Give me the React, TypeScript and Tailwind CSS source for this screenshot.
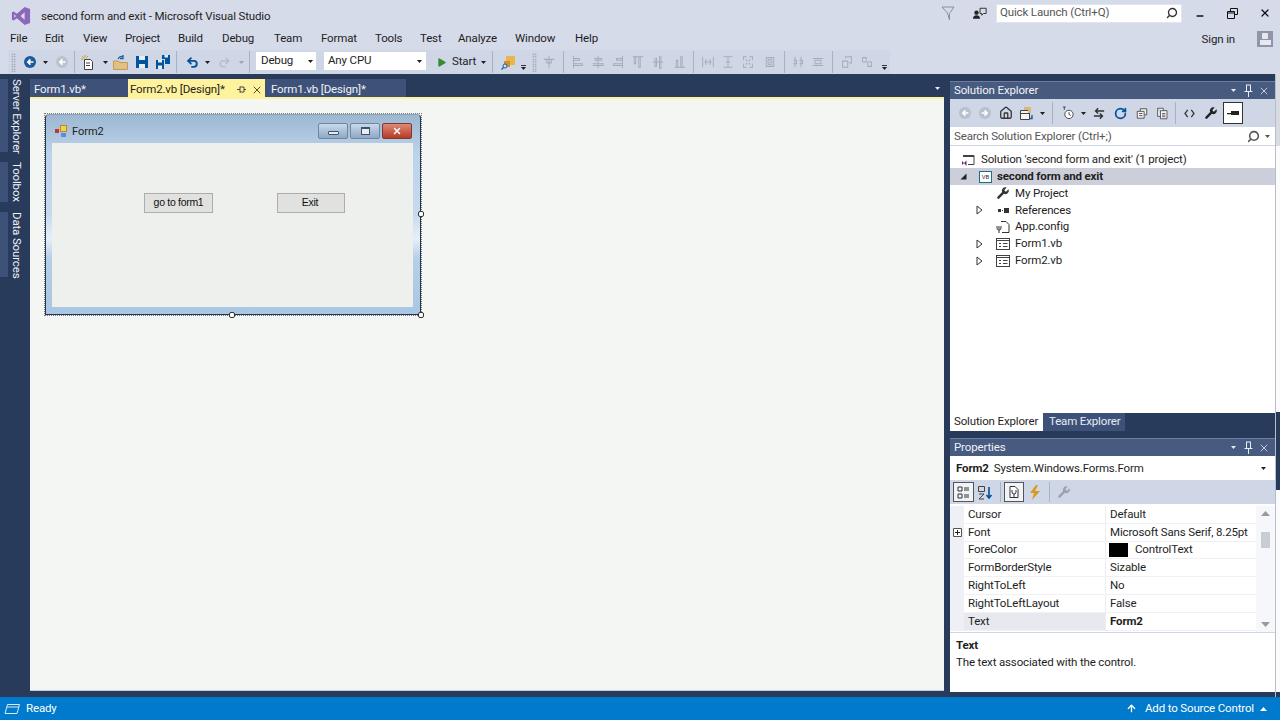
import React from 'react';
import { Minus, Search, X, Wrench, Home, RotateCw, Play, Undo2, Redo2, ArrowUp } from 'lucide-react';

const Caret = ({ className = 'text-[#1e1e1e]' }: { className?: string }) => (
  <svg width="5" height="3" viewBox="0 0 5 3" className={`shrink-0 ${className}`}><path d="M0 0h5L2.5 3z" fill="currentColor" /></svg>
);

const Sep = ({ className }: { className: string }) => <div className={`w-px h-[22px] bg-[#a9b1c4] shrink-0 ${className}`} />;

const Circle = ({ color, className = '', flip = false }: { color: string; className?: string; flip?: boolean }) => (
  <svg width="12" height="12" viewBox="0 0 14 14" className={`shrink-0 ${flip ? '-scale-x-100' : ''} ${className}`}>
    <circle cx="7" cy="7" r="7" fill={color} />
    <path d="M11 7H5M7.5 4L4.5 7l3 3" stroke="#fff" strokeWidth="2" fill="none" />
  </svg>
);

const Grip = ({ className }: { className: string }) => (
  <div className={`w-[5px] h-[19px] shrink-0 bg-[radial-gradient(#8f97ac_0.7px,transparent_0.9px)] bg-[length:2.5px_2.5px] ${className}`} />
);

const Faint = ({ d, className }: { d: string; className: string }) => (
  <svg width="12" height="14" viewBox="0 0 16 16" preserveAspectRatio="none" className={`shrink-0 ${className}`}>
    <path d={d} stroke="#a3abbe" strokeWidth="1.2" fill="none" />
  </svg>
);

const FormIcon = () => (
  <svg width="14" height="12" viewBox="0 0 14 12">
    <rect x="0.5" y="0.5" width="13" height="11" fill="#fff" stroke="#424242" />
    <path d="M0.5 2.5h13M3 5.5h2M7 5.5h4.5M3 8.5h2M7 8.5h4.5" stroke="#424242" />
  </svg>
);

const Expander = () => (
  <svg width="7" height="10" viewBox="0 0 7 10"><path d="M1 1l5 4-5 4z" fill="#fff" stroke="#333" /></svg>
);

const menus = ['File', 'Edit', 'View', 'Project', 'Build', 'Debug', 'Team', 'Format', 'Tools', 'Test', 'Analyze', 'Window', 'Help'];
const menuWidths = [35, 38, 42, 53, 44, 52, 47, 54, 45, 38, 57, 60, 40];

function TitleRow() {
  return (
    <div className="h-[26px] flex items-center shrink-0">
      <svg width="20" height="20" viewBox="0 0 22 22" className="ml-[11px] mt-[6px] shrink-0">
        <path d="M15 1l6 2.4v15.2L15 21 6.5 13.5 3 16 1 15V7l2-1 3.500 2.500z" fill="#8c68b8" />
        <path d="M15 7l-4.500 4 4.500 4zM3.500 9v4l2-2z" fill="#d6dbe9" />
      </svg>
      <span className="ml-[10px] text-[11.5px] text-[#1e1e1e] mt-[7px]">second form and exit - Microsoft Visual Studio</span>
      <div className="ml-auto flex items-center">
        <svg width="14" height="16" viewBox="0 0 14 16" className="mr-[18px]"><path d="M1 2h12L8.500 8.500V15L6.500 8z" fill="none" stroke="#8a8f9c" /></svg>
        <svg width="14" height="13" viewBox="0 0 16 14" className="mr-[9px]">
          <circle cx="4" cy="6" r="2.500" fill="#222" /><path d="M0 13c0-3 2-4 4-4s4 1 4 4z" fill="#222" />
          <path d="M8 1h7v6h-3l-2 2V7H8z" fill="none" stroke="#222" />
        </svg>
        <div className="w-[186px] h-[19px] bg-white flex items-center px-[3px] text-[11.5px] text-[#555] mr-[13px] border border-[#e2e5ee]">
          <span>Quick Launch (Ctrl+Q)</span>
          <Search size={12} strokeWidth={2.8} className="ml-auto text-[#333] -scale-x-100" />
        </div>
        <Minus size={10} strokeWidth={3.5} className="text-[#111] mr-[22px] mt-[5px]" />
        <svg width="11" height="11" viewBox="0 0 11 11" className="mr-[21px]"><path d="M3.500 3V.5h7v6H8M.5 3.500h7v7h-7zM.5 5h7" fill="none" stroke="#111" /></svg>
        <X size={12} strokeWidth={2.4} className="text-[#111] mr-[9px]" />
      </div>
    </div>
  );
}

function MenuRow() {
  return (
    <div className="h-[24px] flex items-center text-[11.5px] text-[#1e1e1e] shrink-0 pt-[1px]">
      <div className="flex pl-[10px]">
        {menus.map((m, i) => (
          <span key={m} style={{ width: menuWidths[i] }} className="shrink-0">{m}</span>
        ))}
      </div>
      <span className="ml-auto mt-[2px]">Sign in</span>
      <div className="w-[16px] h-[16px] bg-[#8f96a8] mr-[7px] ml-[22px] flex flex-col items-center justify-center gap-[1px]">
        <div className="w-[6px] h-[6px] bg-[#e7e9ef] rounded-[1px]" />
        <div className="w-[11px] h-[5px] bg-[#e7e9ef]" />
      </div>
    </div>
  );
}

function ToolbarRow() {
  return (
    <div className="h-[24px] flex items-stretch shrink-0 text-[11.5px] text-[#1e1e1e]">
      <div className="flex items-center h-full bg-[#cfd6e5] ml-[8px] w-[882px]">
        <Grip className="ml-[3px]" />
        <Circle color="#1c5a9b" className="ml-[8px]" />
        <div className="ml-[7px] flex"><Caret /></div>
        <Circle color="#bcc2ce" className="ml-[8px]" />
        <Sep className="ml-[6px]" />
        <svg width="14" height="15" viewBox="0 0 14 15" className="ml-[6px] shrink-0">
          <path d="M3.500 4.500h6l2 2v8h-8z" fill="#fff" stroke="#424242" />
          <path d="M1 1l2.500 2.500M4 0v2.500M0 4h2.500M7 1L5 3" stroke="#c9a227" />
          <path d="M5 8h4M5 10.500h4" stroke="#424242" />
        </svg>
        <div className="ml-[8px] flex"><Caret /></div>
        <svg width="15" height="15" viewBox="0 0 15 15" className="ml-[5px] shrink-0">
          <path d="M0.500 6h5l1 1.500h8V14.500H.5z" fill="#e2bf85" stroke="#c49a55" />
          <path d="M5 4c1-2 3-3 5-2.500M10 0v3.500H7" stroke="#1c5a9b" strokeWidth="1.300" fill="none" />
        </svg>
        <svg width="12" height="12" viewBox="0 0 12 12" className="ml-[8px] shrink-0">
          <path d="M0 0h12v12H0z" fill="#00539c" /><path d="M3 0h6v4H3zM3 8h6v4H3z" fill="#e8edf5" />
        </svg>
        <svg width="14" height="14" viewBox="0 0 14 14" className="ml-[8px] shrink-0">
          <path d="M0 5h8v9H0z" fill="#00539c" /><path d="M6 0h8v9H9V4H6z" fill="#00539c" />
          <path d="M2 5h4v2.500H2zM2 10.500h4V14H2zM8.500 0h3.500v2.500H8.500z" fill="#e8edf5" />
        </svg>
        <Sep className="ml-[6px]" />
        <Undo2 size={13} strokeWidth={3.4} className="ml-[9px] text-[#00539c] shrink-0" />
        <div className="ml-[6px] flex"><Caret /></div>
        <Redo2 size={13} strokeWidth={2.4} className="ml-[8px] text-[#b4bac8] shrink-0" />
        <div className="ml-[8px] flex"><Caret className="text-[#9aa2b6]" /></div>
        <Sep className="ml-[5px]" />
        <div className="w-[60px] h-[18px] ml-[6px] mb-[2px] bg-white flex items-center pl-[5px] pr-[3px] shrink-0">
          <span>Debug</span><Caret className="ml-auto" />
        </div>
        <div className="w-[102px] h-[18px] ml-[8px] mb-[2px] bg-white flex items-center pl-[4px] pr-[4px] shrink-0">
          <span>Any CPU</span><Caret className="ml-auto" />
        </div>
        <Play size={11} strokeWidth={0} fill="#388a34" className="ml-[10px] shrink-0" />
        <span className="ml-[5px] w-[26px] shrink-0">Start</span>
        <div className="ml-[3px] flex"><Caret /></div>
        <Sep className="ml-[6px]" />
        <svg width="14" height="15" viewBox="0 0 14 15" className="ml-[8px] shrink-0">
          <path d="M5 1h9v9H5z" fill="#e8b64c" /><path d="M3 6h6v6H3z" fill="#cf8f2e" />
          <circle cx="4" cy="11" r="2" fill="#dce3ef" stroke="#1c5a9b" /><path d="M2.500 12.500L.5 14.500" stroke="#1c5a9b" strokeWidth="1.300" />
        </svg>
        <div className="flex flex-col items-center ml-[6px] mt-[10px] gap-[1px] shrink-0"><div className="w-[5px] h-px bg-[#333]" /><Caret /></div>
        <Grip className="ml-[6px]" />
        <Faint className="ml-[6px]" d="M1 5h14M8 1v14M5 5v4h6V5" />
        <Sep className="ml-[8px]" />
        <Faint className="ml-[8px]" d="M2 1v14M2 4h8v2H2M2 10h12v2H2" />
        <Faint className="ml-[8px]" d="M8 1v14M3 4h10v2H3M1 10h14v2H1" />
        <Faint className="ml-[8px]" d="M14 1v14M14 4H6v2h8M14 10H2v2h12" />
        <Faint className="ml-[8px]" d="M1 2h14M3 2v8h2V2M9 2v12h2V2" />
        <Faint className="ml-[8px]" d="M1 8h14M4 3v10h2V3M10 1v14h2V1" />
        <Faint className="ml-[10px]" d="M1 14h14M3 14V6h2v8M9 14V2h2v12" />
        <Sep className="ml-[7px]" />
        <Faint className="ml-[8px]" d="M1 2v12M15 2v12M4 8h8M6 5l-2 3 2 3M10 5l2 3-2 3" />
        <Faint className="ml-[8px]" d="M2 2h12M2 14h12M8 2v12M5 8h6" />
        <Faint className="ml-[8px]" d="M2 6V2h4M10 2h4v4M14 10v4h-4M6 14H2v-4M5 5l2 2M11 5L9 7M5 11l2-2M11 11L9 9" />
        <Faint className="ml-[10px]" d="M3 3h10v10H3zM5.500 5.500h5v5h-5zM7 8h2" />
        <Sep className="ml-[8px]" />
        <Faint className="ml-[7px]" d="M4 2v12M12 2v12M2 6h4v4H2M10 6h4v4h-4" />
        <Faint className="ml-[8px]" d="M1 4h14M1 12h14M4 6h8v4H4z" />
        <Sep className="ml-[8px]" />
        <Faint className="ml-[8px]" d="M2 7h7v7H2zM6 4V2h8v7h-3" />
        <Faint className="ml-[8px]" d="M2 3h5v5H2zM9 8h5v5H9z" />
        <div className="flex flex-col items-center ml-[9px] mt-[10px] gap-[1px] shrink-0"><div className="w-[5px] h-px bg-[#333]" /><Caret /></div>
      </div>
    </div>
  );
}

function LeftRail() {
  const items: [string, string][] = [['Server Explorer', 'h-[73px]'], ['Toolbox', 'h-[40px]'], ['Data Sources', 'h-[65px]']];
  return (
    <div className="w-[30px] shrink-0 flex flex-col gap-[10px] pt-[5px]">
      {items.map(([t, h]) => (
        <div key={t} className={`${h} flex items-stretch`}>
          <div className="w-[8px] bg-[#3e5178] shrink-0" />
          <span className="[writing-mode:vertical-rl] text-[11.5px] leading-[15px] text-[#eef1f7] whitespace-nowrap ml-[1px]">{t}</span>
        </div>
      ))}
    </div>
  );
}

function Tabs() {
  return (
    <div className="h-[23px] pt-[5px] flex items-stretch text-[11.5px] whitespace-nowrap shrink-0">
      <div className="w-[98px] bg-[#3e5178] text-[#eef1f7] pl-[4px] pt-[3px] flex items-center shrink-0">Form1.vb*</div>
      <div className="w-[137px] bg-[#fff29d] text-[#1e1e1e] pl-[2px] pt-[3px] flex items-center shrink-0">
        <span className="w-[104px] shrink-0">Form2.vb [Design]*</span>
        <svg width="9" height="9" viewBox="0 0 9 9" className="ml-[3px] shrink-0"><path d="M0 4.500h3M3 1.500v6M3 2h4v5H3M7 4.500h2" stroke="#444" fill="none" /></svg>
        <X size={12} strokeWidth={1.6} className="ml-[5px] text-[#222] shrink-0" />
      </div>
      <div className="w-[141px] bg-[#3e5178] text-[#eef1f7] pl-[6px] pt-[3px] flex items-center shrink-0">Form1.vb [Design]*</div>
      <div className="ml-auto mr-[4px] self-center"><Caret className="text-[#e8ecf4]" /></div>
    </div>
  );
}

const Handle = ({ className }: { className: string }) => (
  <div className={`absolute w-[6px] h-[6px] bg-white border border-[#333] rounded-[2px] ${className}`} />
);

function FormDesigner() {
  return (
    <div className="relative w-[378px] h-[203px] ml-[14px] mt-[14px] border border-dotted border-[#777] font-['Liberation_Sans',sans-serif] tracking-normal">
      <div className="h-[201px] flex flex-col border border-[#23364f] border-t-[#8ea3b8] rounded-t-[4px] bg-[linear-gradient(180deg,#9db8d2_0%,#bdd3ea_20%,#c6daef_50%,#e6eff8_62%,#b6cfe8_72%,#a9c6e2_100%)]">
        <div className="h-[28px] shrink-0 flex items-center pl-[9px] pr-[8px] pt-[4px]">
          <svg width="13" height="12" viewBox="0 0 13 12" className="shrink-0">
            <rect x="5.500" y="0.500" width="6" height="6" fill="#f5d04c" stroke="#b88f1e" />
            <rect x="0" y="4" width="4" height="4" fill="#c9352b" />
            <rect x="6" y="8" width="5" height="4" fill="#5a8fd8" />
          </svg>
          <span className="ml-[4px] mt-[2px] text-[11px] text-[#222] font-['Roboto',sans-serif]">Form2</span>
          <div className="ml-auto flex gap-[2px]">
            <div className="w-[30px] h-[16px] rounded-[2px] border border-[#6f86a0] bg-[linear-gradient(180deg,#c9d9ea,#8ea9c5)] flex items-end justify-center pb-[3px]">
              <div className="w-[11px] h-[4px] border border-[#40536a] bg-[#e6edf4] rounded-[1px]" />
            </div>
            <div className="w-[30px] h-[16px] rounded-[2px] border border-[#6f86a0] bg-[linear-gradient(180deg,#c9d9ea,#8ea9c5)] flex items-center justify-center">
              <div className="w-[9px] h-[8px] border border-[#40536a] border-t-2 bg-[#e6edf4]" />
            </div>
            <div className="w-[30px] h-[16px] rounded-[2px] border border-[#7a3a34] bg-[linear-gradient(180deg,#dd8a78,#b83a26)] flex items-center justify-center">
              <X size={10} strokeWidth={3.4} className="text-white" />
            </div>
          </div>
        </div>
        <div className="flex-1 ml-[6px] mr-[7px] mb-[7px] bg-[#eef0ee]">
          <div className="flex pl-[92px] pt-[50px] gap-[64px]">
            <div className="w-[69px] h-[20px] bg-[#e1e1df] border border-[#adadad] flex items-center justify-center text-[10.5px] tracking-[-0.3px] text-[#111]">go to form1</div>
            <div className="w-[68px] h-[20px] bg-[#e1e1df] border border-[#adadad] flex items-center justify-center text-[10.5px] tracking-[-0.3px] text-[#111] pr-[2px]">Exit</div>
          </div>
        </div>
      </div>
      <Handle className="right-[-3px] top-[97px]" />
      <Handle className="left-[184px] bottom-[-3px]" />
      <Handle className="right-[-3px] bottom-[-3px]" />
    </div>
  );
}

function PanelTitle({ title }: { title: string }) {
  return (
    <div className="h-[18px] bg-[#475a7f] border-t border-[#6c7da0] flex items-center text-[11.5px] text-[#f0f3f8] pl-[4px] pr-[5px] shrink-0">
      <span>{title}</span>
      <Caret className="ml-auto text-[#e8ecf4]" />
      <svg width="11" height="13" viewBox="0 0 11 13" className="ml-[7px] text-[#e8ecf4]">
        <path d="M3 1h5M3.500 1v6M7.500 1v6M1.500 7.500h8M5.500 8v5" stroke="currentColor" fill="none" />
      </svg>
      <X size={12} strokeWidth={1.6} className="ml-[4px] text-[#e8ecf4]" />
    </div>
  );
}

function SolutionToolbar() {
  return (
    <div className="h-[28px] bg-[#cfd6e5] flex items-center pl-[9px] shrink-0">
      <Circle color="#b9bfcb" />
      <Circle color="#b9bfcb" flip className="ml-[8px]" />
      <Home size={14} strokeWidth={2.2} className="ml-[8px] text-[#333] shrink-0" />
      <svg width="14" height="15" viewBox="0 0 14 15" className="ml-[7px] shrink-0">
        <path d="M0.500 4.500h9v9h-9z" fill="#f6f6f6" stroke="#424242" /><path d="M0.500 7.500h9" stroke="#424242" /><path d="M4 1h7v6H8V4H4z" fill="#dcb67a" /><path d="M12 9v3.500H9" stroke="#1c5a9b" strokeWidth="1.400" fill="none" />
      </svg>
      <div className="ml-[6px] flex"><Caret /></div>
      <div className="w-px h-[22px] bg-[#a9b1c4] ml-[7px] shrink-0" />
      <svg width="13" height="15" viewBox="0 0 14 16" className="ml-[9px] shrink-0">
        <circle cx="7.500" cy="9" r="4.500" fill="#fff" stroke="#424242" /><path d="M7.500 6.500V9l2 1M1 1h3M2.500 1v3" stroke="#424242" fill="none" />
      </svg>
      <div className="ml-[6px] flex"><Caret /></div>
      <svg width="12" height="13" viewBox="0 0 14 14" className="ml-[7px] shrink-0"><path d="M13 4H3M6 1L3 4l3 3M1 10h10M8 7l3 3-3 3" stroke="#333" strokeWidth="1.700" fill="none" /></svg>
      <RotateCw size={13} strokeWidth={3.2} className="ml-[9px] text-[#00539c] shrink-0" />
      <svg width="12" height="13" viewBox="0 0 14 14" className="ml-[9px] shrink-0"><path d="M5 4V1.500h7.500v7H10M1.500 4.500h8v8h-8zM3.500 7h4M3.500 9.500h4" fill="#f6f6f6" stroke="#424242" /></svg>
      <svg width="13" height="15" viewBox="0 0 16 16" className="ml-[8px] shrink-0"><path d="M2 1.500h7v3M5.500 4.500h8v10h-8zM7.500 8h4M7.500 10h4M7.500 12h4M2 1.500v10h3.500" fill="#f6f6f6" stroke="#424242" /></svg>
      <div className="w-px h-[22px] bg-[#a9b1c4] ml-[6px] shrink-0" />
      <svg width="11" height="9" viewBox="0 0 12 10" className="ml-[8px] shrink-0"><path d="M4 1L1 5l3 4M8 1l3 4-3 4" stroke="#333" strokeWidth="1.400" fill="none" /></svg>
      <Wrench size={14} strokeWidth={0} fill="#222" className="ml-[9px] shrink-0" />
      <div className="w-[20px] h-[22px] bg-white border border-[#333] ml-[5px] flex items-center justify-center shrink-0">
        <svg width="12" height="6" viewBox="0 0 12 6"><path d="M4 1h8v4H4zM0 3h4v1.200H0z" fill="#222" /></svg>
      </div>
    </div>
  );
}

function Tree() {
  const rows: { label: string; exp?: boolean; icon: React.ReactNode }[] = [
    { label: 'My Project', icon: <Wrench size={14} strokeWidth={0} fill="#333" /> },
    { label: 'References', exp: true, icon: <div className="flex items-center gap-[1px] justify-center"><div className="w-[3px] h-[3px] bg-[#333]" /><div className="w-[1px] h-[1px] bg-[#333]" /><div className="w-[5px] h-[5px] bg-[#333]" /></div> },
    { label: 'App.config', icon: <svg width="14" height="14" viewBox="0 0 14 14"><path d="M5 1.500h5l3 3v8H6M3 6v3M1 6v2a2 2 0 004 0V6M3 10v3" stroke="#333" fill="none" /></svg> },
    { label: 'Form1.vb', exp: true, icon: <FormIcon /> },
    { label: 'Form2.vb', exp: true, icon: <FormIcon /> },
  ];
  return (
    <div className="flex-1 bg-white text-[11.5px] text-[#1e1e1e] pt-[5px]">
      <div className="h-[17px] flex items-center pl-[11px]">
        <svg width="14" height="14" viewBox="0 0 14 14" className="shrink-0">
          <path d="M2 2.500h11v9H7" fill="none" stroke="#424242" /><path d="M2 2h11v2H2z" fill="#424242" />
          <path d="M1 8l2 2-2 2V8zM3 10l2.500-2.500V13z" fill="#68217a" />
        </svg>
        <span className="ml-[6px]">Solution 'second form and exit' (1 project)</span>
      </div>
      <div className="h-[17px] flex items-center bg-[#ccced9] pl-[10px] font-bold">
        <svg width="7" height="7" viewBox="0 0 7 7" className="shrink-0"><path d="M6.500.5v6h-6z" fill="#222" /></svg>
        <div className="ml-[12px] w-[13px] h-[12px] border border-[#1c6f8a] bg-white text-[6px] leading-[10px] text-center font-normal">VB</div>
        <span className="ml-[5px]">second form and exit</span>
      </div>
      {rows.map(r => (
        <div key={r.label} className={`h-[16.8px] flex items-center ${r.exp ? 'pl-[26px]' : 'pl-[46px]'}`}>
          {r.exp && <div className="w-[7px] mr-[13px] flex"><Expander /></div>}
          <div className="w-[14px] flex justify-center shrink-0">{r.icon}</div>
          <span className="ml-[5px]">{r.label}</span>
        </div>
      ))}
    </div>
  );
}

function SolutionExplorer() {
  return (
    <div className="flex-1 flex flex-col min-h-0">
      <PanelTitle title="Solution Explorer" />
      <SolutionToolbar />
      <div className="h-[19px] pt-[1px] bg-white flex items-center pl-[4px] pr-[5px] text-[11.5px] text-[#555] border-b border-[#cfd6e5] shrink-0">
        <span>Search Solution Explorer (Ctrl+;)</span>
        <Search size={13} strokeWidth={2.8} className="ml-auto text-[#555] -scale-x-100" />
        <div className="ml-[5px] flex"><Caret className="text-[#555]" /></div>
      </div>
      <Tree />
      <div className="h-[18px] flex items-stretch text-[11.5px] whitespace-nowrap shrink-0">
        <div className="w-[93px] bg-white text-[#1e1e1e] pl-[4px] flex items-center shrink-0">Solution Explorer</div>
        <div className="w-[82px] bg-[#3e5178] text-[#e8ecf4] pl-[6px] flex items-center shrink-0">Team Explorer</div>
      </div>
    </div>
  );
}

const propRows: { name: string; value: React.ReactNode; sel?: boolean; plus?: boolean }[] = [
  { name: 'Cursor', value: 'Default' },
  { name: 'Font', value: 'Microsoft Sans Serif, 8.25pt', plus: true },
  { name: 'ForeColor', value: <span className="flex items-center -ml-[1px]"><span className="w-[19px] h-[14px] bg-black mr-[7px]" />ControlText</span> },
  { name: 'FormBorderStyle', value: 'Sizable' },
  { name: 'RightToLeft', value: 'No' },
  { name: 'RightToLeftLayout', value: 'False' },
  { name: 'Text', value: <b>Form2</b>, sel: true },
];

function Properties() {
  return (
    <div className="h-[254px] shrink-0 flex flex-col mt-[7px] text-[11.5px] text-[#1e1e1e]">
      <PanelTitle title="Properties" />
      <div className="h-[24px] pt-[1px] bg-white flex items-center pl-[6px] pr-[9px] shrink-0">
        <b>Form2</b><span className="ml-[5px]">System.Windows.Forms.Form</span>
        <Caret className="ml-auto" />
      </div>
      <div className="h-[24px] bg-[#cfd6e5] flex items-center pl-[3px] shrink-0">
        <div className="w-[21px] h-[20px] bg-[#f1f3f7] border border-[#555] flex items-center justify-center shrink-0">
          <svg width="13" height="13" viewBox="0 0 13 13"><path d="M1 1h4v4H1zM1 8h4v4H1zM7 2h5M7 4h5M7 9h5M7 11h5" stroke="#333" fill="none" /></svg>
        </div>
        <svg width="16" height="15" viewBox="0 0 16 15" className="ml-[3px] shrink-0"><path d="M1.500 1.500h6v5h-6zM2 9h5L2 14h5" stroke="#444" fill="none" /><path d="M12 2v11M9.500 10l2.500 3 2.500-3" stroke="#00539c" strokeWidth="1.600" fill="none" /></svg>
        <div className="w-px h-[20px] bg-[#a9b1c4] ml-[7px] shrink-0" />
        <div className="w-[20px] h-[20px] ml-[3px] bg-[#f1f3f7] border border-[#555] flex items-center justify-center shrink-0">
          <svg width="14" height="14" viewBox="0 0 14 14"><path d="M3 1.500h5l3 3v8H3z" fill="#fff" stroke="#333" /><path d="M5 5v2a2 2 0 004 0V5M7 9v3" stroke="#333" fill="none" /></svg>
        </div>
        <svg width="12" height="15" viewBox="0 0 12 15" className="ml-[5px] shrink-0"><path d="M7 0L1 8h4l-2 7 8-9H6l3-6z" fill="#d79a1c" /></svg>
        <div className="w-px h-[20px] bg-[#a9b1c4] ml-[8px] shrink-0" />
        <Wrench size={14} strokeWidth={0} fill="#9aa2b0" className="ml-[7px] shrink-0" />
      </div>
      <div className="h-[129px] pt-[2px] bg-white flex shrink-0 border-b border-[#cfd6e5]">
        <div className="flex-1 min-w-0">
          {propRows.map(r => (
            <div key={r.name} className="h-[17.8px] flex border-b border-[#f0f1f5]">
              <div className="w-[14px] bg-[#eef0f5] flex items-center justify-center shrink-0">
                {r.plus && (
                  <svg width="9" height="9" viewBox="0 0 9 9"><path d="M.5.5h8v8h-8z" fill="#fff" stroke="#555" /><path d="M2 4.500h5M4.500 2v5" stroke="#222" /></svg>
                )}
              </div>
              <div className={`w-[142px] pl-[4px] flex items-center border-r border-[#eceef3] shrink-0 ${r.sel ? 'bg-[#e8e9ee]' : ''}`}>{r.name}</div>
              <div className="pl-[4px] flex items-center min-w-0 whitespace-nowrap">{r.value}</div>
            </div>
          ))}
        </div>
        <div className="w-[19px] shrink-0 flex flex-col items-center pt-[5px] bg-[#f6f7fa]">
          <svg width="9" height="5" viewBox="0 0 9 5"><path d="M0 5l4.500-5L9 5z" fill="#999" /></svg>
          <div className="w-[9px] h-[16px] bg-[#c8ccd4] mt-[16px]" />
          <svg width="9" height="5" viewBox="0 0 9 5" className="mt-auto mb-[5px]"><path d="M0 0l4.500 5L9 0z" fill="#999" /></svg>
        </div>
      </div>
      <div className="flex-1 bg-white pl-[6px] pt-[4px]">
        <div className="font-bold h-[17px]">Text</div>
        <div>The text associated with the control.</div>
      </div>
    </div>
  );
}

function RightSliver() {
  return (
    <div className="w-[5px] shrink-0 flex flex-col border-l border-[#b8bdca]">
      <div className="h-[72px] bg-[#d9dbe3]" />
      <div className="h-[266px] bg-[#fbfbfb]" />
      <div className="h-[78px] bg-[#293b5b]" />
      <div className="h-[202px] bg-[#fbfbfb]" />
    </div>
  );
}

function StatusBar() {
  return (
    <div className="h-[23px] bg-[#007acc] flex items-center text-[11.5px] text-white shrink-0">
      <svg width="16" height="12" viewBox="0 0 16 12" className="ml-[4px] shrink-0"><path d="M3.500 1.500h12L13 10.500H1z" fill="none" stroke="#d6eaf8" /><path d="M3 4h12" stroke="#d6eaf8" /></svg>
      <span className="ml-[6px]">Ready</span>
      <ArrowUp size={11} strokeWidth={2.8} className="ml-auto" />
      <span className="ml-[8px]">Add to Source Control</span>
      <svg width="7" height="4" viewBox="0 0 7 4" className="ml-[6px] mr-[13px] shrink-0"><path d="M0 4l3.500-4L7 4z" fill="#fff" /></svg>
    </div>
  );
}

export default function App() {
  return (
    <div className="w-[1280px] h-[720px] overflow-hidden flex flex-col bg-[#d6dbe9] font-['Roboto','Liberation_Sans',sans-serif] tracking-[-0.15px]">
      <TitleRow />
      <MenuRow />
      <ToolbarRow />
      <div className="flex-1 min-h-0 flex bg-[#293b5b]">
        <LeftRail />
        <div className="w-[914px] shrink-0 flex flex-col pb-[6px]">
          <Tabs />
          <div className="h-[2px] bg-[#fff29d] shrink-0" />
          <div className="flex-1 bg-[#f4f6f3] border-b border-[#c5cbd8]">
            <FormDesigner />
          </div>
        </div>
        <div className="w-[325px] ml-[6px] shrink-0 flex flex-col pt-[7px] pb-[5px]">
          <SolutionExplorer />
          <Properties />
        </div>
        <RightSliver />
      </div>
      <StatusBar />
    </div>
  );
}
